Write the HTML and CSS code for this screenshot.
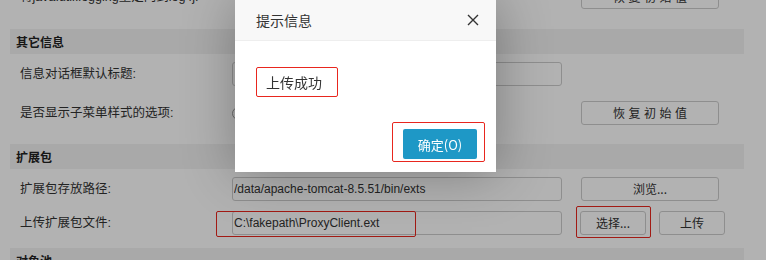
FILE: index.html
```html
<!doctype html>
<html lang="zh-CN">
  <head>
    <meta charset="UTF-8" />
    <title>系统设置</title>
    <link rel="stylesheet" href="styles.css">
  </head>
  <body>
    <div class="page">
      <div class="row row-top">
        <label class="label">将java.util.logging重定向到log4j:</label>
        <div class="field"></div>
        <button class="btn btn-wide spaced">恢复初始值</button>
      </div>

      <div class="section-title">其它信息</div>
      <div class="row row-first">
        <label class="label">信息对话框默认标题:</label>
        <input class="input" type="text" value="" />
      </div>
      <div class="row row-radio">
        <label class="label">是否显示子菜单样式的选项:</label>
        <div class="field"><span class="radio"></span></div>
        <button class="btn btn-wide spaced">恢复初始值</button>
      </div>

      <div class="section-title">扩展包</div>
      <div class="row row-first">
        <label class="label">扩展包存放路径:</label>
        <input class="input" type="text" value="/data/apache-tomcat-8.5.51/bin/exts" />
        <button class="btn btn-wide">浏览...</button>
      </div>
      <div class="row row-upload">
        <label class="label">上传扩展包文件:</label>
        <div class="field-wrap">
          <input class="input" type="text" value="C:\fakepath\ProxyClient.ext" />
          <span class="mark mark-input"></span>
        </div>
        <span class="mark-box mark-choose"><button class="btn btn-small">选择...</button></span>
        <button class="btn btn-small btn-upload">上传</button>
      </div>

      <div class="section-title section-last">对象池</div>
    </div>

    <div class="shade"></div>

    <div class="dialog">
      <div class="dialog-title">
        <span>提示信息</span>
        <svg class="dialog-close" width="12" height="12" viewBox="0 0 12 12">
          <path d="M1 1 L11 11 M11 1 L1 11" stroke="#333" stroke-width="1.4" fill="none" />
        </svg>
      </div>
      <div class="dialog-body">
        <span class="mark-box dialog-msg">上传成功</span>
      </div>
      <div class="dialog-foot">
        <span class="mark-box mark-ok"><button class="btn-ok">确定(O)</button></span>
      </div>
    </div>
  </body>
</html>
```

FILE: styles.css
```css
body {
  margin: 0;
  padding: 0;
  background: #fff;
  font-family: "Liberation Sans", "Noto Sans CJK SC", sans-serif;
  font-size: 12px;
  color: #333;
  overflow: hidden;
}

.page {
  width: 734px;
  margin: -15px 0 0 10px;
}

.row {
  display: flex;
  align-items: center;
  height: 24px;
}

.row-top {
  margin-bottom: 20px;
}

.row-first {
  margin-top: 8px;
}

.row-radio {
  margin-top: 15px;
}

.row-upload {
  margin-top: 10px;
}

.label {
  width: 212px;
  padding-left: 10px;
  line-height: 24px;
  font-size: 12.5px;
  white-space: nowrap;
}

.field {
  width: 330px;
  height: 24px;
  display: flex;
  align-items: center;
}

.field-wrap {
  position: relative;
  width: 330px;
  height: 24px;
}

.input {
  box-sizing: border-box;
  width: 330px;
  height: 24px;
  margin: 0;
  padding: 0 0 0 1px;
  border: 1px solid #ccc;
  border-radius: 3px;
  font-family: "Liberation Sans", sans-serif;
  font-size: 12px;
  color: #333;
  background: #fff;
  outline: none;
}

.radio {
  box-sizing: border-box;
  width: 13px;
  height: 13px;
  border: 1px solid #999;
  border-radius: 50%;
  background: #fff;
}

.btn {
  box-sizing: border-box;
  height: 24px;
  margin: 0 0 0 19px;
  padding: 0;
  border: 1px solid #ccc;
  border-radius: 3px;
  background: #fff;
  font-family: "Noto Sans CJK SC", sans-serif;
  font-size: 12px;
  color: #333;
  line-height: 22px;
}

.btn-wide {
  width: 138px;
}

.spaced {
  letter-spacing: 3.5px;
  text-indent: 3.5px;
}

.btn-small {
  width: 66px;
  margin: 0;
}

.btn-upload {
  margin-left: 8px;
}

.section-title {
  height: 25px;
  line-height: 25px;
  padding-left: 6px;
  margin-top: 19px;
  background: #f2f2f2;
  font-family: "Noto Sans CJK SC", sans-serif;
  font-weight: bold;
  font-size: 12px;
  color: #222;
}

.row-top + .section-title {
  margin-top: 0;
}

.section-last {
  margin-top: 13px;
}

/* red annotation boxes */
.mark-box {
  display: inline-flex;
  border: 1px solid #e8261e;
  border-radius: 2px;
}

.mark {
  position: absolute;
  border: 1px solid #e8261e;
  border-radius: 2px;
}

.mark-input {
  left: -16px;
  top: 0;
  width: 198px;
  height: 24px;
}

.mark-choose {
  margin-left: 14px;
  padding: 4px 4px 2px 3px;
  margin-top: -5px;
  margin-bottom: -3px;
}

.shade {
  position: fixed;
  inset: 0;
  background: rgba(0, 0, 0, 0.3);
}

.dialog {
  position: fixed;
  left: 235px;
  top: 0;
  width: 261px;
  height: 172px;
  background: #fff;
  box-shadow: 1px 1px 50px rgba(0, 0, 0, 0.3);
  font-family: "Noto Sans CJK SC", sans-serif;
}

.dialog-title {
  display: flex;
  align-items: center;
  justify-content: space-between;
  height: 40px;
  padding: 0 17px 0 21px;
  background: #f8f8f8;
  border-bottom: 1px solid #eee;
  font-size: 14px;
  color: #333;
}

.dialog-close {
  display: block;
}

.dialog-body {
  padding: 26px 0 0 21px;
}

.dialog-msg {
  height: 28px;
  line-height: 28px;
  padding: 0 15px 0 9px;
  font-size: 14px;
  color: #333;
}

.dialog-foot {
  display: flex;
  justify-content: flex-end;
  padding: 25px 11px 0 0;
}

.mark-ok {
  padding: 6px 7px 2px 10px;
}

.btn-ok {
  width: 74px;
  height: 30px;
  margin: 0;
  padding: 0;
  border: 0;
  border-radius: 2px;
  background: #1e98c6;
  color: #fff;
  font-family: "Noto Sans CJK SC", sans-serif;
  font-size: 13px;
}
```
